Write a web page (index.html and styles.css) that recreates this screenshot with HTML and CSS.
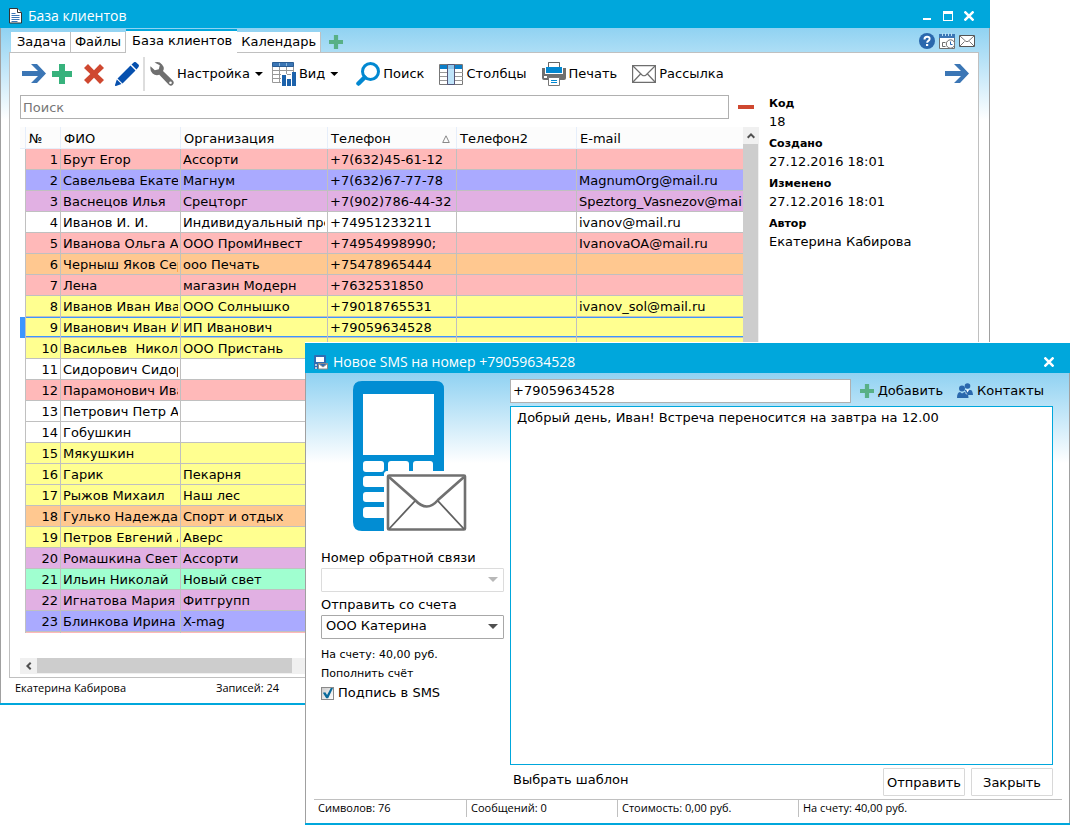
FILE: index.html
```html
<!DOCTYPE html>
<html lang="ru">
<head>
<meta charset="utf-8">
<title>База клиентов</title>
<link rel="stylesheet" href="styles.css">
</head>
<body>
<svg class="defs" aria-hidden="true">
  <symbol id="arrow" viewBox="0 0 24 20"><path fill="#3b76b5" d="M0 7h16L9 0h6l9 9.500-9 9.500H9l7-7H0z"/></symbol>
  <symbol id="plus" viewBox="0 0 20 20"><path fill="currentColor" d="M7 0h6v7h7v6h-7v7H7v-7H0V7h7z"/></symbol>
  <symbol id="close" viewBox="0 0 10 10"><path stroke="#fff" stroke-width="2.500" d="M.5.5l9 9M9.500.5l-9 9"/></symbol>
  <symbol id="envelope" viewBox="0 0 24 18"><path fill="#fff" stroke="#6e6e6e" stroke-width="1.200" d="M.6.600h22.800v16.800H.6z"/><path fill="none" stroke="#6e6e6e" stroke-width="1.200" d="M1 1l9 9q2 1.500 4 0l9-9M1 17l7.500-8M23 17l-7.500-8"/></symbol>
</svg>
<main class="desktop">
  <section class="window clients">
    <header class="titlebar">
      <svg class="title-icon" viewBox="0 0 14 16"><path fill="#fff" stroke="#333" d="M.5.500h8l4 4v10.500H.5z"/><path fill="#fff" stroke="#333" d="M8.500.500v4h4"/><path stroke="#3b76b5" d="M2.500 5.500h4M2.500 7.500h8M2.500 9.500h8M2.500 11.500h8M2.500 13.500h6"/></svg>
      <h1>База клиентов</h1>
      <div class="controls">
        <button aria-label="Свернуть"><svg viewBox="0 0 10 10"><path fill="#fff" d="M1 7h8v2H1z"/></svg></button>
        <button aria-label="Развернуть"><svg viewBox="0 0 10 10"><path fill="#fff" d="M0 0h10v10H0zM1 3v6h8V3z" fill-rule="evenodd"/></svg></button>
        <button aria-label="Закрыть окно"><svg><use href="#close"/></svg></button>
      </div>
    </header>
    <nav class="tabs">
      <button class="tab">Задача</button>
      <button class="tab">Файлы</button>
      <button class="tab active">База клиентов</button>
      <button class="tab">Календарь</button>
      <button class="add-tab" aria-label="Добавить вкладку"><svg><use href="#plus"/></svg></button>
      <div class="tab-tools">
        <button aria-label="Справка"><svg viewBox="0 0 16 16"><circle cx="8" cy="8" r="8" fill="#2a68ad"/><path fill="none" stroke="#fff" stroke-width="2" d="M5.500 6.500q0-2.700 2.600-2.700t2.500 2.200q0 1.200-1.500 2-.9.600-.9 1.700"/><path fill="#fff" d="M7 11h2.200v2H7z"/></svg></button>
        <button aria-label="Расписание"><svg viewBox="0 0 16 16"><path fill="#fff" stroke="#6e6e6e" d="M.5 2.500h15v13H.5z"/><path fill="#3b76b5" d="M0 1h16v4H0z"/><path stroke="#b8dff4" d="M3.500 0v3M6.500 0v3M9.500 0v3M12.500 0v3"/><path fill="none" stroke="#6e6e6e" d="M6.500 9.500h-3v4h3"/><circle cx="11.500" cy="11" r="4.200" fill="#fff" stroke="#6e6e6e"/><path fill="none" stroke="#2a68ad" d="M11.500 8.500v3h2"/></svg></button>
        <button aria-label="Почта"><svg viewBox="0 0 16 12"><path fill="#fff" stroke="#555" d="M.5.500h15v11H.5z"/><path fill="none" stroke="#777" d="M1 1l6 5.500h2L15 1M1 11l4.500-4.500M15 11l-4.500-4.500"/></svg></button>
      </div>
    </nav>
    <div class="panel">
      <div class="toolbar">
        <div class="pair-tight">
          <button aria-label="Перейти"><svg class="i-arrow"><use href="#arrow"/></svg></button>
          <button class="green" aria-label="Создать"><svg class="i20"><use href="#plus"/></svg></button>
        </div>
        <div class="pair">
          <button aria-label="Удалить"><svg class="i20" viewBox="0 0 20 20"><path fill="#cf4830" d="M4 0l6 6.300L16 0l4 4-6.300 6L20 16l-4 4-6-6.300L4 20l-4-4 6.300-6L0 4z"/></svg></button>
          <button aria-label="Изменить"><svg class="i24" viewBox="0 0 24 24"><path fill="#0650ae" d="M15.500 3.500L20.500 8.500 7.500 21.500 2.500 16.500zM16.500 2.500L19 .2q1.200-.6 2.200.2l2.500 2.300q.6 1-.2 2.300L21.500 7.500zM1.800 17.500L6.500 22l-5.500 2q-1.200.2-1-1z"/></svg></button>
        </div>
        <div class="main-tools">
          <button><svg class="i24" viewBox="0 0 24 24"><path fill="#6f6f6f" d="M4.500.600Q9-1 12 2.500T13 9l10 9.800q1.600 2-.2 4t-4-.1L9.300 12.800Q5.500 14 2.600 11.500T.5 4.200l4.300 4 4-1 1-4z"/><circle cx="20.500" cy="20.800" r="1.300" fill="#fff"/></svg>Настройка<i class="caret"></i></button>
          <button><svg class="i24" viewBox="0 0 24 24"><path fill="#fff" stroke="#999" d="M.5 4v16.500h21V4M.5 8.500h21M.5 12.500h21M.5 16.500h21M7.500 4v16M14.500 4v16"/><path fill="#3b76b5" stroke="#2a5d94" d="M.5.500h21v4H.5z"/><path stroke="#8db8dd" d="M7.500 1v3M14.500 1v3"/><path fill="#fff" d="M9 12h6v4h4v-6h5v14H9z"/><path fill="#1c62ab" d="M10 13h4v11h-4zM15 17h4v7h-4zM20 10h4v14h-4z"/></svg>Вид<i class="caret"></i></button>
        </div>
        <div class="main-tools wide">
          <button><svg class="i24" viewBox="0 0 24 24"><circle cx="14.500" cy="9.500" r="8" fill="none" stroke="#0288d1" stroke-width="3"/><path stroke="#0288d1" stroke-width="4.500" stroke-linecap="round" d="M8.500 15.500L2.500 21.500"/></svg>Поиск</button>
          <button><svg class="i-grid" viewBox="0 0 24 21"><path fill="#fff" stroke="#777" d="M.5.500h23v20H.5z"/><path stroke="#999" d="M1 8.500h23M1 12.500h23M1 16.500h23"/><path fill="#0b7ec8" d="M1 1h22v4H1z"/><path fill="#bfe4fa" stroke="#557" d="M8.500.500h7v20h-7z"/><path fill="#8ac6ed" d="M9 1h6v4H9z"/></svg>Столбцы</button>
          <button><svg class="i24" viewBox="0 0 24 24"><path fill="#fff" stroke="#666" d="M6.500.500h11V7h-11z"/><path fill="#6f6f6f" d="M0 6h3v6h18V6h3v10q0 2-2 2H2q-2 0-2-2z"/><path fill="#fff" d="M3 5h18v7H3z"/><path fill="#fff" stroke="#666" d="M6.500.500h11V7h-11z"/><path fill="#0288d1" d="M4 5h16v6H4z"/><path fill="#fff" d="M2 14h3v2H2z"/><path fill="#fff" stroke="#777" d="M6.500 15.500h11v8h-11z"/><path stroke="#0288d1" d="M9 18.500h6M9 20.500h6"/></svg>Печать</button>
          <button><svg class="i-mail"><use href="#envelope"/></svg>Рассылка</button>
        </div>
        <button class="push" aria-label="Далее"><svg class="i-arrow"><use href="#arrow"/></svg></button>
      </div>
      <div class="content">
        <div class="list">
          <div class="search-row">
            <input type="text" placeholder="Поиск" aria-label="Поиск">
            <button class="minus" aria-label="Убрать"></button>
          </div>
          <div class="grid">
            <div class="grid-view">
            <table>
              <colgroup><col class="c-mark"><col class="c-num"><col class="c-name"><col class="c-org"><col class="c-tel"><col class="c-tel2"><col></colgroup>
              <thead><tr><th></th><th>№</th><th>ФИО</th><th>Организация</th><th><div class="sorted">Телефон<svg viewBox="0 0 8 8"><path fill="none" stroke="#888" d="M4 .8L7.300 7.500H.7z"/></svg></div></th><th>Телефон2</th><th>E-mail</th></tr></thead>
              <tbody>
                <tr class="red"><td></td><td>1</td><td><div>Брут Егор</div></td><td><div>Ассорти</div></td><td>+7(632)45-61-12</td><td></td><td></td></tr>
                <tr class="blue"><td></td><td>2</td><td><div>Савельева Екате</div></td><td><div>Магнум</div></td><td>+7(632)67-77-78</td><td></td><td>MagnumOrg@mail.ru</td></tr>
                <tr class="purple"><td></td><td>3</td><td><div>Васнецов Илья</div></td><td><div>Срецторг</div></td><td>+7(902)786-44-32</td><td></td><td>Speztorg_Vasnezov@mai</td></tr>
                <tr><td></td><td>4</td><td><div>Иванов И. И.</div></td><td><div>Индивидуальный пре</div></td><td>+74951233211</td><td></td><td>ivanov@mail.ru</td></tr>
                <tr class="red"><td></td><td>5</td><td><div>Иванова Ольга А</div></td><td><div>ООО ПромИнвест</div></td><td>+74954998990;</td><td></td><td>IvanovaOA@mail.ru</td></tr>
                <tr class="orange"><td></td><td>6</td><td><div>Черныш Яков Сер</div></td><td><div>ооо Печать</div></td><td>+75478965444</td><td></td><td></td></tr>
                <tr class="red"><td></td><td>7</td><td><div>Лена</div></td><td><div>магазин Модерн</div></td><td>+7632531850</td><td></td><td></td></tr>
                <tr class="yellow"><td></td><td>8</td><td><div>Иванов Иван Ива</div></td><td><div>ООО Солнышко</div></td><td>+79018765531</td><td></td><td>ivanov_sol@mail.ru</td></tr>
                <tr class="yellow selected"><td></td><td>9</td><td><div>Иванович Иван И</div></td><td><div>ИП Иванович</div></td><td>+79059634528</td><td></td><td></td></tr>
                <tr class="yellow"><td></td><td>10</td><td><div>Васильев&nbsp; Никол</div></td><td><div>ООО Пристань</div></td><td></td><td></td><td></td></tr>
                <tr><td></td><td>11</td><td><div>Сидорович Сидор</div></td><td></td><td></td><td></td><td></td></tr>
                <tr class="red"><td></td><td>12</td><td><div>Парамонович Ива</div></td><td></td><td></td><td></td><td></td></tr>
                <tr><td></td><td>13</td><td><div>Петрович Петр А</div></td><td></td><td></td><td></td><td></td></tr>
                <tr><td></td><td>14</td><td><div>Гобушкин</div></td><td></td><td></td><td></td><td></td></tr>
                <tr class="yellow"><td></td><td>15</td><td><div>Мякушкин</div></td><td></td><td></td><td></td><td></td></tr>
                <tr class="yellow"><td></td><td>16</td><td><div>Гарик</div></td><td><div>Пекарня</div></td><td></td><td></td><td></td></tr>
                <tr class="yellow"><td></td><td>17</td><td><div>Рыжов Михаил</div></td><td><div>Наш лес</div></td><td></td><td></td><td></td></tr>
                <tr class="orange"><td></td><td>18</td><td><div>Гулько Надежда</div></td><td><div>Спорт и отдых</div></td><td></td><td></td><td></td></tr>
                <tr class="yellow"><td></td><td>19</td><td><div>Петров Евгений А</div></td><td><div>Аверс</div></td><td></td><td></td><td></td></tr>
                <tr class="purple"><td></td><td>20</td><td><div>Ромашкина Светл</div></td><td><div>Ассорти</div></td><td></td><td></td><td></td></tr>
                <tr class="green-row"><td></td><td>21</td><td><div>Ильин Николай</div></td><td><div>Новый свет</div></td><td></td><td></td><td></td></tr>
                <tr class="purple"><td></td><td>22</td><td><div>Игнатова Мария</div></td><td><div>Фитгрупп</div></td><td></td><td></td><td></td></tr>
                <tr class="blue"><td></td><td>23</td><td><div>Блинкова Ирина</div></td><td><div>X-mag</div></td><td></td><td></td><td></td></tr>
                <tr class="red partial"><td></td><td></td><td></td><td></td><td></td><td></td><td></td></tr>
              </tbody>
            </table>
            </div>
            <div class="vscroll"><button aria-label="Вверх"><svg viewBox="0 0 8 8"><path fill="none" stroke="#505050" stroke-width="2" d="M.7 5.700L4 2.400l3.300 3.300"/></svg></button><div class="thumb"></div></div>
            <div class="hscroll"><button aria-label="Влево"><svg viewBox="0 0 8 8"><path fill="none" stroke="#505050" stroke-width="2" d="M5.700.7L2.400 4l3.300 3.300"/></svg></button><div class="thumb"></div></div>
          </div>
        </div>
        <dl class="details">
          <dt>Код</dt><dd>18</dd>
          <dt>Создано</dt><dd>27.12.2016 18:01</dd>
          <dt>Изменено</dt><dd>27.12.2016 18:01</dd>
          <dt>Автор</dt><dd>Екатерина Кабирова</dd>
        </dl>
      </div>
    </div>
    <footer class="status"><span>Екатерина Кабирова</span><span>Записей: 24</span></footer>
  </section>

  <section class="window sms">
    <header class="titlebar">
      <svg class="title-icon" viewBox="0 0 14 16"><path fill="#2f6cb3" d="M0 2q0-1 1-1h10q1 0 1 1v13H0z"/><path fill="#fff" d="M2 3h8v5H2z"/><path fill="#b9c9d9" d="M1 10h2v2H1zM1 13h2v2H1z"/><path fill="#fff" stroke="#8a8a8a" d="M4.500 9.500h9v5.500h-9zM4.500 9.500L9 13l4.500-3.500"/></svg>
      <h1>Новое SMS на номер +79059634528</h1>
      <div class="controls"><button aria-label="Закрыть окно"><svg><use href="#close"/></svg></button></div>
    </header>
    <div class="sms-body">
      <div class="options">
        <svg class="phone" viewBox="0 0 116 152">
          <path fill="#028dd3" d="M9 0h74q8 0 8 8v82H35q-4 0-4 4v56H9q-9 0-9-9V9q0-9 9-9z"/>
          <path fill="#fff" d="M10 13h71v61H10z"/>
          <g fill="#fff"><rect x="10" y="80" width="21" height="11" rx="3"/><rect x="35" y="80" width="21" height="14" rx="3"/><rect x="60" y="80" width="20" height="14" rx="3"/><rect x="10" y="95" width="24" height="11" rx="3"/><rect x="10" y="111" width="24" height="10" rx="3"/><rect x="10" y="126" width="24" height="11" rx="3"/></g>
          <path fill="#fff" d="M31 94q0-4 4-4h79v62H31z"/>
          <rect x="35" y="94.500" width="77" height="54" rx="1" fill="#fff" stroke="#707070" stroke-width="2.600"/>
          <path fill="none" stroke="#707070" stroke-width="2.600" d="M36 96l26 23q12 13 23 0l26-23"/>
          <path stroke="#606060" stroke-width="1.800" d="M36 148l26-28M111 148l-26-28"/>
        </svg>
        <label for="reply">Номер обратной связи</label>
        <div class="select off"><select id="reply" disabled><option></option></select></div>
        <label for="account">Отправить со счета</label>
        <div class="select"><select id="account"><option>ООО Катерина</option></select></div>
        <p class="small">На счету: 40,00 руб.</p>
        <a class="small" href="#">Пополнить счёт</a>
        <label class="check"><input type="checkbox" checked><span>Подпись в SMS</span></label>
      </div>
      <div class="compose">
        <div class="to">
          <input type="text" value="+79059634528" aria-label="Номер получателя">
          <button class="add"><svg class="i14"><use href="#plus"/></svg>Добавить</button>
          <button><svg class="i16" viewBox="0 0 16 16"><g fill="#2a68ad"><circle cx="10.500" cy="3" r="2.800"/><path d="M7.500 7h6q2 0 2.500 5h-5z"/><circle cx="5" cy="5.500" r="3"/><path d="M0 15q0-5.500 3-6l2 1.500L7.500 9q4 .5 4 6z"/></g><path fill="#fff" d="M9 6.500l1.500 3 1.800-3zM8.500 9l2 3-2-1.500z"/></svg>Контакты</button>
        </div>
        <textarea aria-label="Текст сообщения">Добрый день, Иван! Встреча переносится на завтра на 12.00</textarea>
        <div class="actions"><a href="#">Выбрать шаблон</a><button>Отправить</button><button>Закрыть</button></div>
      </div>
    </div>
    <footer class="sms-status"><span>Символов: 76</span><span>Сообщений: 0</span><span>Стоимость: 0,00 руб.</span><span>На счету: 40,00 руб.</span></footer>
  </section>
</main>
</body>
</html>
```
FILE: styles.css
```css
* { box-sizing: border-box; }
body { margin: 0; background: #fff; color: #000; font: 13px/18px "DejaVu Sans", Verdana, sans-serif; }
button, input, select, textarea { font: inherit; color: inherit; margin: 0; border-radius: 0; }
button { padding: 0; border: 0; background: none; display: flex; align-items: center; }
svg { display: block; flex: none; }
a { color: inherit; text-decoration: none; }
p { margin: 0; }
.defs { position: absolute; width: 0; height: 0; }

.desktop { position: relative; height: 100vh; min-height: 828px; overflow: hidden; }
.window { position: absolute; display: flex; flex-direction: column; border-bottom: 2px solid #00a7dc; }
.clients { inset: 0 82px 123px 0; background: linear-gradient(#90d2f2 28px, #fff 120px); }
.sms { inset: 343px 2px 3px 305px; background: linear-gradient(#90d2f2 30px, #fff 120px); box-shadow: 0 -1px #fff; }
.window::before { content: ""; position: absolute; inset: 28px 0 0; border: solid #a0a0a0; border-width: 0 1px; pointer-events: none; }

.titlebar { position: relative; flex: none; display: flex; align-items: center; height: 28px; padding: 4px 16px 0 9px; background: #00a7dc; color: #fff; }
.titlebar h1 { flex: 1; margin: 0 0 0 5px; font: 14px/20px "Open Sans", "Noto Sans", sans-serif; }
.title-icon { width: 14px; height: 16px; }
.controls { display: flex; gap: 11px; }
.controls svg { width: 10px; height: 10px; }

/* client list window */
.tabs { flex: none; display: flex; align-items: flex-end; height: 24px; padding: 0 15px 0 11px; }
.tab { height: 20px; padding: 0 4px; background: #fff; border: solid #c0c0c0; border-width: 0 1px 0 0; }
.tab:first-child { padding-left: 6px; }
.tab.active { position: relative; height: 24px; margin-bottom: -1px; padding: 0 5px 2px 6px; border: 0; border-top: 2px solid #00a7dc; }
.add-tab { align-self: center; margin: 4px 0 0 8px; color: #58b086; }
.add-tab svg { width: 14px; height: 14px; }
.tab-tools { display: flex; align-items: center; align-self: center; gap: 4px; margin: 2px 0 0 auto; }
.tab-tools svg { width: 16px; height: 16px; }
.panel { flex: 1; display: flex; flex-direction: column; min-height: 0; margin: 0 11px 0 9px; background: #fff; border: 1px solid #c0c0c0; }
.toolbar { flex: none; display: flex; align-items: center; gap: 12px; height: 42px; padding: 0 9px 0 12px; }
.pair-tight { display: flex; gap: 6px; }
.pair { display: flex; align-items: center; gap: 11px; }
.main-tools { display: flex; align-items: center; gap: 9px; }
.pair + .main-tools { height: 34px; margin-left: -8px; padding-left: 5px; border-left: 2px solid #ddd; }
.main-tools.wide { gap: 15px; margin-left: 6px; }
.main-tools button { gap: 3px; }
.push { margin-left: auto; }
.green { color: #37b27c; }
.i-arrow { width: 24px; height: 20px; }
.i-mail { width: 24px; height: 18px; }
.i-grid { width: 24px; height: 21px; }
.i24 { width: 24px; height: 24px; }
.i20 { width: 20px; height: 20px; }
.i16 { width: 16px; height: 16px; }
.i14 { width: 14px; height: 14px; }
.caret { width: 8px; height: 4px; margin-left: 2px; background: #000; clip-path: polygon(0 0, 100% 0, 50% 100%); }

.content { flex: 1; display: flex; min-height: 0; }
.list { flex: 1; min-width: 0; display: flex; flex-direction: column; gap: 8px; padding: 0 0 3px 10px; }
.search-row { display: flex; align-items: center; padding-right: 5px; gap: 9px; }
.search-row input { flex: 1; min-width: 0; height: 24px; padding: 0 2px; border: 1px solid #b0b0b0; }
.search-row input::placeholder { color: #777; opacity: 1; }
.minus { width: 16px; height: 4px; background: #cf4830; }
.grid { flex: 1; min-height: 0; display: grid; grid-template: minmax(0, 1fr) 16px / minmax(0, 1fr) 16px; }
.grid-view { overflow: hidden; }
table { width: 100%; table-layout: fixed; border-collapse: separate; border-spacing: 0; }
.c-mark { width: 6px; }
.c-num { width: 35px; }
.c-name { width: 120px; }
.c-org { width: 147px; }
.c-tel { width: 129px; }
.c-tel2 { width: 120px; }
th { height: 22px; padding: 2px 3px 0; text-align: left; font-weight: normal; background: #fcfcfc; border: solid #e6eefa; border-width: 0 1px 1px 0; }
td { height: 21px; padding: 2px 2px 0; white-space: nowrap; overflow: hidden; border: solid #c0c0c0; border-width: 0 1px 1px 0; }
td div { overflow: hidden; }
th:first-child, td:first-child { padding: 0; }
td:nth-child(2) { text-align: right; }
th:last-child, td:last-child { border-right: 0; }
.sorted { display: flex; align-items: center; justify-content: space-between; padding-right: 3px; }
.sorted svg { width: 8px; height: 8px; }
.red td { background: #ffb9b9; }
.blue td { background: #aaaaff; }
.purple td { background: #e1b0e3; }
.orange td { background: #ffc890; }
.yellow td { background: #ffff90; }
.green-row td { background: #a0ffd0; }
tr td:first-child { background: #fff; border-bottom: 0; }
.selected td { box-shadow: inset 0 1px #3c96ff, inset 0 -1px #3c96ff; }
.selected td:first-child { background: #3c96ff; }
.partial td { height: 1px; padding: 0; border-bottom: 0; }
.vscroll, .hscroll { display: flex; background: #f0f0f0; }
.vscroll { flex-direction: column; }
.vscroll button, .hscroll button { justify-content: center; width: 16px; height: 17px; }
.vscroll svg, .hscroll svg { width: 8px; height: 8px; }
.vscroll .thumb { width: 15px; height: 60%; background: #cdcdcd; }
.hscroll .thumb { width: 255px; height: 15px; background: #cdcdcd; }
.hscroll button { width: 17px; height: 15px; }
.details { flex: none; width: 219px; margin: 0; padding: 0 9px 0 10px; }
.details dt { font-size: 11px; font-weight: bold; }
.details dd { margin: 0 0 4px; }
.status { flex: none; display: grid; grid-template-columns: 201px 1fr; height: 25px; padding: 1px 15px; font: 11px/18px "Open Sans", "Noto Sans", sans-serif; }

/* message window */
.sms .titlebar { height: 30px; padding: 7px 16px 0 9px; }
.sms-body { flex: 1; display: flex; gap: 6px; min-height: 0; padding: 6px 17px 3px 16px; }
.options { flex: none; width: 183px; display: flex; flex-direction: column; }
.phone { width: 116px; height: 152px; margin: 2px 0 15px 32px; }
.options > label { line-height: 20px; }
.select { position: relative; margin: 0 0 3px; }
.select select { display: block; width: 100%; height: 24px; padding: 0 4px 2px; appearance: none; background: #fff; border: 1px solid #a8a8a8; border-radius: 1px; }
.select select:disabled { border-color: #dcdcdc; opacity: 1; }
.select::after { content: ""; position: absolute; right: 6px; top: 9px; width: 10px; height: 5px; background: #505050; clip-path: polygon(0 0, 100% 0, 50% 100%); pointer-events: none; }
.select.off::after { background: #b8b8b8; }
.small { font-size: 11px; line-height: 19px; }
p.small { margin-top: 3px; }
.check { display: flex; align-items: center; gap: 4px; }
.check input { position: relative; flex: none; width: 13px; height: 13px; margin: 0; appearance: none; border: 1px solid #8a8a8a; background: linear-gradient(135deg, #ccc, #fff); }
.check input:checked::after { content: ""; position: absolute; inset: 0; background: #096a9b; clip-path: polygon(8% 48%, 30% 44%, 46% 68%, 80% 4%, 100% 4%, 56% 98%, 38% 98%); }
.compose { flex: 1; min-width: 0; display: flex; flex-direction: column; gap: 3px; }
.to { display: flex; gap: 14px; padding-right: 9px; }
.to input { flex: 1; min-width: 0; height: 24px; margin-right: -5px; padding: 0 2px 2px; border: 1px solid #b0b0b0; background: #fff; }
.to button { gap: 4px; }
.to svg { color: #58b086; }
textarea { flex: 1; display: block; width: 100%; padding: 2px 6px; resize: none; border: 1px solid #00a7dc; outline: 0; background: #fff; }
.actions { display: flex; gap: 6px; }
.actions a { flex: 1; padding: 3px; }
.actions button { justify-content: center; width: 82px; height: 28px; padding-top: 2px; border: 1px solid #d8d8d8; border-radius: 1px; background: #fff; }
.sms-status { flex: none; display: grid; grid-template-columns: 153px 151px 181px 1fr; height: 24px; margin: 0 8px 0 9px; border-top: 1px solid #c0c0c0; font: 11px/16px "Open Sans", "Noto Sans", sans-serif; }
.sms-status span { height: 17px; padding-left: 4px; border-right: 1px solid #c0c0c0; }
.sms-status span:last-child { border: 0; }
```
